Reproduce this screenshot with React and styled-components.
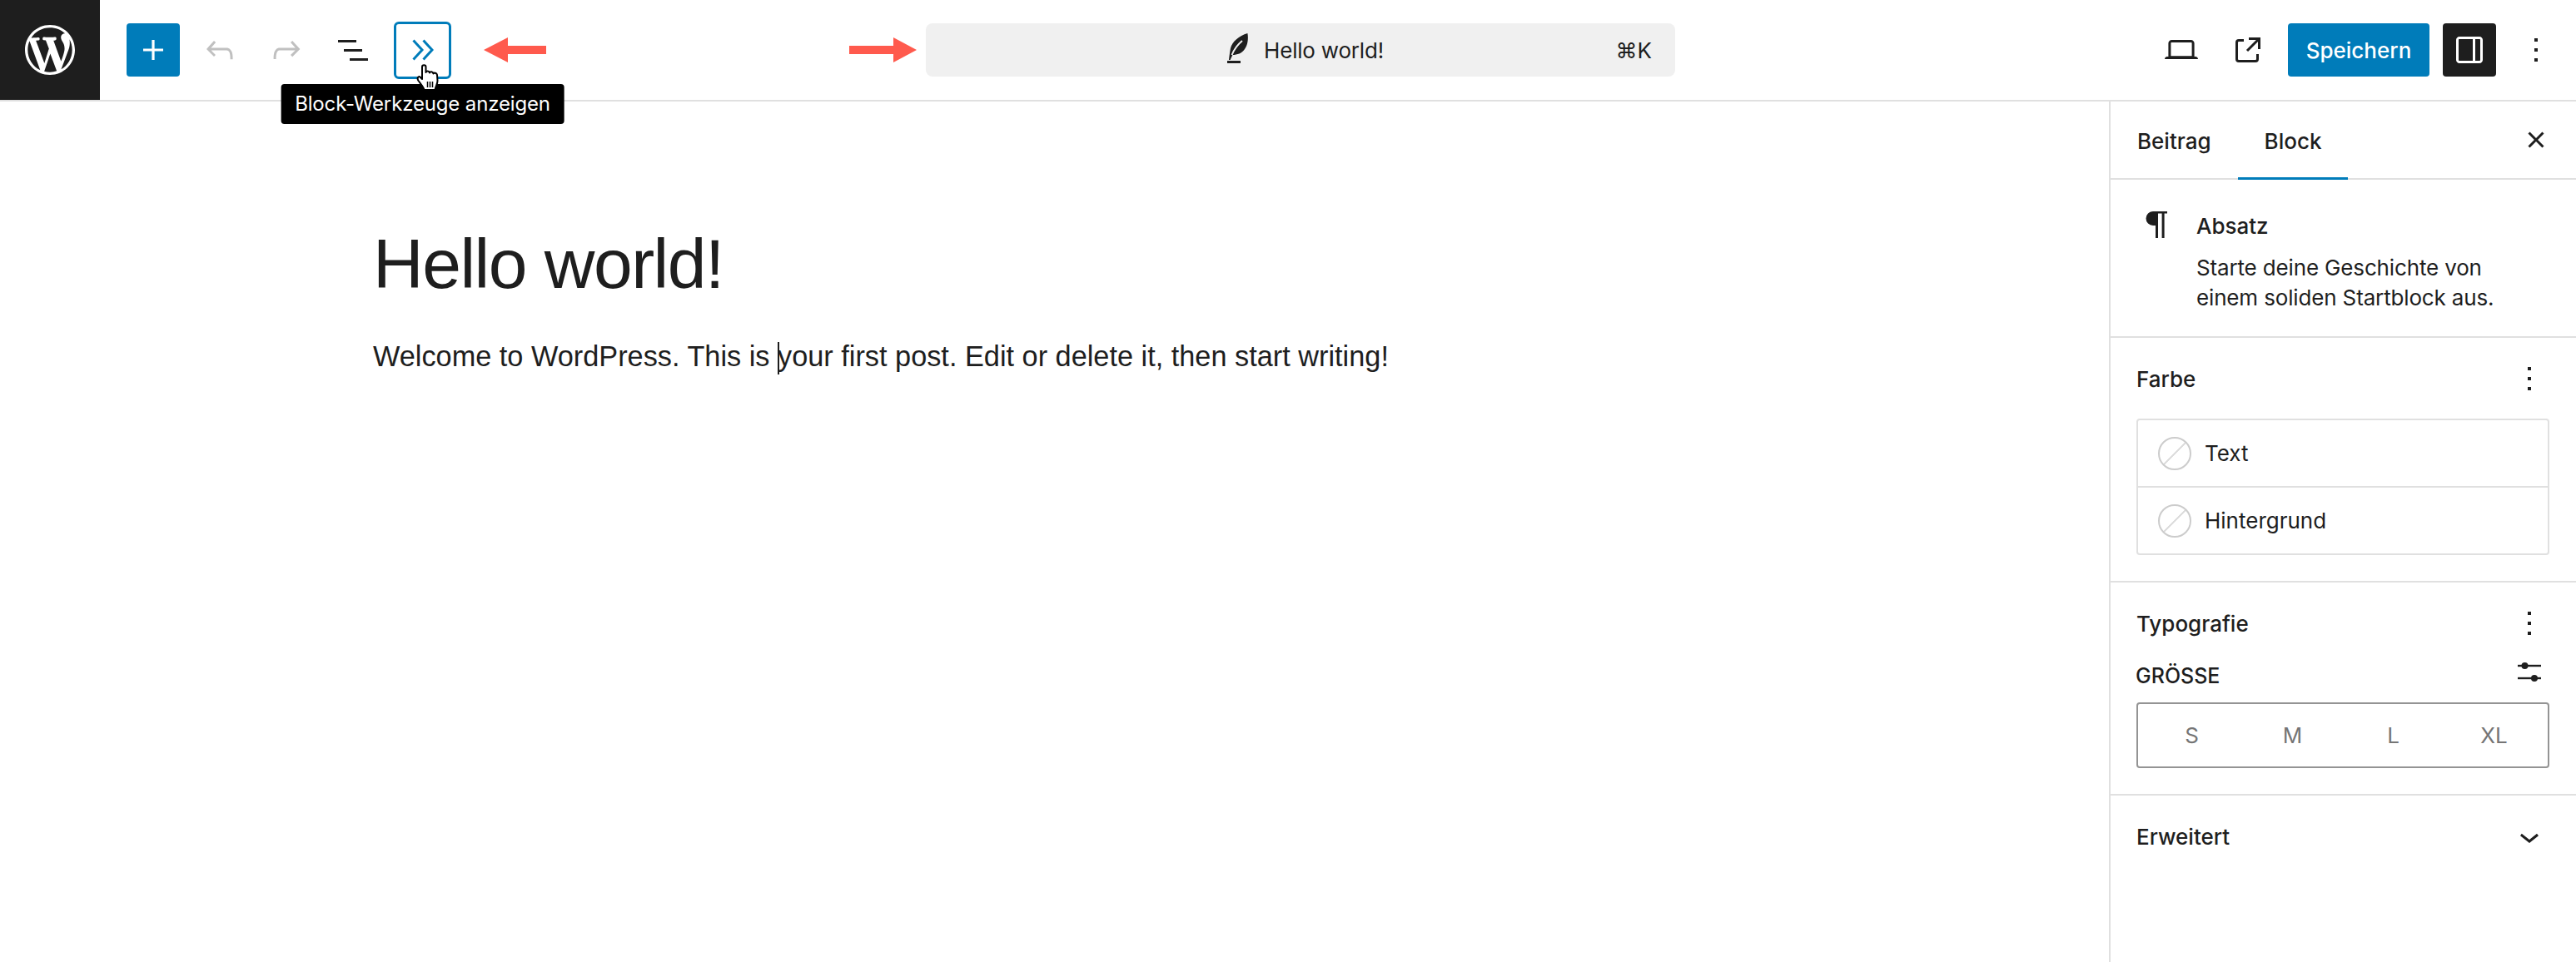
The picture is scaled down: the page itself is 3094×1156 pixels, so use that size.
import React from 'react';
import styled, { createGlobalStyle } from 'styled-components';

const GlobalStyle = createGlobalStyle`
  * { box-sizing: border-box; }
  html, body { margin: 0; padding: 0; background: #fff; }
  body {
    font-family: Inter, "Liberation Sans", sans-serif;
    font-size: 26px;
    color: #1e1e1e;
  }
`;

const Icon = ({ d, size = 48, fill = 'currentColor' }) => (
  <svg width={size} height={size} viewBox="0 0 24 24" fill={fill}>
    <path d={d} />
  </svg>
);

const paths = {
  plus: 'M18 11.2h-5.2V6h-1.6v5.2H6v1.6h5.2V18h1.6v-5.2H18z',
  undo: 'M18.3 11.7c-.6-.6-1.4-.9-2.3-.9H6.7l2.9-3.3-1.1-1-4.5 5L8.5 16l1-1-2.7-2.7H16c.5 0 .9.2 1.3.5 1 1 1 3.4 1 4.5v.3h1.5v-.2c0-1.5 0-4.3-1.5-5.7z',
  redo: 'M15.6 6.5l-1.1 1 2.9 3.3H8c-.9 0-1.7.3-2.3.9-1.4 1.5-1.4 4.2-1.4 5.6v.2h1.5v-.3c0-1.1 0-3.5 1-4.5.3-.3.7-.5 1.3-.5h9.2L14.5 15l1.1 1.1 4.6-4.6-4.6-5z',
  list: 'M3 6h11v1.5H3V6zm3.5 5.5h11V13h-11v-1.5zM21 17H10v1.5h11V17z',
  desktop: 'M20.5 16h-.7V8c0-1.1-.9-2-2-2H6.2c-1.1 0-2 .9-2 2v8h-.7c-.8 0-1.5.7-1.5 1.5h20c0-.8-.7-1.5-1.5-1.5zM5.7 8c0-.3.2-.5.5-.5h11.6c.3 0 .5.2.5.5v7.6H5.7V8z',
  external: 'M19.5 4.5h-7V6h4.44l-5.97 5.97 1.06 1.06L18 7.06v4.44h1.5v-7Zm-13 1a2 2 0 0 0-2 2v10a2 2 0 0 0 2 2h10a2 2 0 0 0 2-2v-3H17v3a.5.5 0 0 1-.5.5h-10a.5.5 0 0 1-.5-.5v-10a.5.5 0 0 1 .5-.5h3V5.5h-3Z',
  sidebar: 'M18 4H6c-1.1 0-2 .9-2 2v12c0 1.1.9 2 2 2h12c1.1 0 2-.9 2-2V6c0-1.1-.9-2-2-2zm-4 14.5H6c-.3 0-.5-.2-.5-.5V6c0-.3.2-.5.5-.5h8v13zm4.5-.5c0 .3-.2.5-.5.5h-2.5v-13H18c.3 0 .5.2.5.5v12z',
  more: 'M13 19h-2v-2h2v2zm0-6h-2v-2h2v2zm0-6h-2V5h2v2z',
  close: 'M12 13.06l3.712 3.713 1.061-1.06L13.061 12l3.712-3.712-1.06-1.06L12 10.938 8.288 7.227l-1.061 1.06L10.939 12l-3.712 3.712 1.06 1.061L12 13.061z',
  paragraph: 'M10 4h8.5v1.2h-1.7V20h-1.5V5.2H13V20h-1.5v-7.5H10A4.25 4.25 0 0 1 10 4z',
  chevronDown: 'M17.5 11.6L12 16l-5.5-4.4.9-1.2L12 14l4.5-3.6 1 1.2z',
  wordpress: 'M20 10c0-5.51-4.49-10-10-10C4.48 0 0 4.49 0 10c0 5.52 4.48 10 10 10 5.51 0 10-4.48 10-10zM7.78 15.37L4.37 6.22c.55-.02 1.17-.08 1.17-.08.5-.06.44-1.13-.06-1.11 0 0-1.45.11-2.37.11-.18 0-.37 0-.58-.01C4.12 2.69 6.87 1.11 10 1.11c2.33 0 4.45.87 6.05 2.34-.68-.11-1.65.39-1.65 1.58 0 .74.45 1.36.9 2.1.35.61.55 1.36.55 2.46 0 1.49-1.4 5-1.4 5l-3.03-8.37c.54-.02.82-.17.82-.17.5-.05.44-1.25-.06-1.22 0 0-1.44.12-2.38.12-.87 0-2.33-.12-2.33-.12-.5-.03-.56 1.2-.06 1.22l.92.08 1.26 3.41zM17.41 10c.24-.64.74-1.87.43-4.25.7 1.29 1.05 2.71 1.05 4.25 0 3.29-1.73 6.24-4.4 7.78.97-2.59 1.94-5.2 2.92-7.78zM6.1 18.09C3.12 16.65 1.11 13.53 1.11 10c0-1.3.23-2.48.72-3.59C3.25 10.3 4.67 14.2 6.1 18.09zm4.03-6.63l2.58 6.98c-.86.29-1.76.45-2.71.45-.79 0-1.57-.11-2.29-.33.81-2.38 1.62-4.74 2.42-7.1z',
};

const WpLogo = () => (
  <svg width="60" height="60" viewBox="0 0 20 20" fill="#fff">
    <path d={paths.wordpress} />
  </svg>
);

const ChevronsRight = () => (
  <svg width="26" height="26" viewBox="0 0 26 26" fill="none" stroke="#007cba" strokeWidth="3">
    <path d="M1.5 1.5 12 13 1.5 24.5" />
    <path d="M13.5 1.5 24 13 13.5 24.5" />
  </svg>
);

const FeatherIcon = () => (
  <svg width="48" height="48" viewBox="0 0 24 24">
    <path fill="#1e1e1e" d="M5 20h8v-1.500H5V20zM6 18c.3-2.500.6-5 1-7C8 7 12 3.500 17.200 2c.6 3.500.1 7-1.700 9.500C13.800 14 11 15 8.200 15L6.800 18z" />
    <path fill="none" stroke="#f0f0f0" strokeWidth="1" d="M7.800 15C9 12 11 9 14 6.500" />
  </svg>
);

const SlidersIcon = () => (
  <svg width="48" height="48" viewBox="0 0 24 24" fill="#1e1e1e">
    <rect x="5" y="7.400" width="14" height="1.200" />
    <rect x="5" y="14.900" width="14" height="1.200" />
    <circle cx="9.250" cy="8" r="2" />
    <circle cx="15" cy="15.500" r="2" />
  </svg>
);

const PointerHand = () => (
  <svg width="30" height="33" viewBox="0 0 27 33" fill="#fff" stroke="#000" strokeWidth="2" strokeLinejoin="round">
    <path d="M6.500 3.500C6.500.5 11 .5 11 3.500V10c.5-2 4-2 4.500.5.5-2 4-1.700 4.500 1 1-1.500 4-1 4.500 1.500l.5 7c0 4-2 6-3 11H9c-1-4-4-7-7-11-2-3 0-6 2-4.500L6.500 18z" />
    <path fill="none" strokeWidth="1.500" d="M13 21v7M16 21v7M19 21v7" />
  </svg>
);

const RedArrow = ({ left }) => (
  <svg width={left ? 75 : 81} height="30" viewBox={left ? '0 0 75 30' : '0 0 81 30'} fill="#ff5a4d">
    {left
      ? <path d="M0 15 29 0v10h46v10H29v10z" />
      : <path d="M81 15 53 0v10H0v10h53v10z" />}
  </svg>
);

export default function App() {
  return (
    <Page>
      <GlobalStyle />
      <Header>
        <HeaderLeft>
          <LogoBlock><WpLogo /></LogoBlock>
          <HeaderTools>
            <PrimaryButton><Icon d={paths.plus} /></PrimaryButton>
            <ToolButton $muted><Icon d={paths.undo} /></ToolButton>
            <ToolButton $muted><Icon d={paths.redo} /></ToolButton>
            <ToolButton><Icon d={paths.list} /></ToolButton>
            <BlockToolsButton>
              <ChevronsRight />
              <CursorWrap><PointerHand /></CursorWrap>
              <Tooltip>Block-Werkzeuge anzeigen</Tooltip>
            </BlockToolsButton>
            <LeftArrow><RedArrow left /></LeftArrow>
          </HeaderTools>
        </HeaderLeft>
        <HeaderCenter>
          <RedArrow />
          <CommandBar>
            <CommandTitle>
              <FeatherIcon />
              <span>Hello world!</span>
            </CommandTitle>
            <Shortcut>⌘K</Shortcut>
          </CommandBar>
        </HeaderCenter>
        <HeaderRight>
          <ToolButton><Icon d={paths.desktop} /></ToolButton>
          <ToolButton><Icon d={paths.external} /></ToolButton>
          <SaveButton>Speichern</SaveButton>
          <ToggleButton><Icon d={paths.sidebar} /></ToggleButton>
          <ToolButton><Icon d={paths.more} /></ToolButton>
        </HeaderRight>
      </Header>

      <Body>
        <Canvas>
          <PostTitle>Hello world!</PostTitle>
          <PostText>Welcome to WordPress. This is <Caret />your first post. Edit or delete it, then start writing!</PostText>
        </Canvas>

        <Sidebar>
          <Tabs>
            <TabList>
              <Tab>Beitrag</Tab>
              <Tab $active>Block</Tab>
            </TabList>
            <CloseWrap><Icon d={paths.close} /></CloseWrap>
          </Tabs>

          <BlockCard>
            <IconSlot><Icon d={paths.paragraph} /></IconSlot>
            <div>
              <BlockName>Absatz</BlockName>
              <BlockDescription>Starte deine Geschichte von<br />einem soliden Startblock aus.</BlockDescription>
            </div>
          </BlockCard>

          <Panel>
            <PanelHead>
              <PanelTitle>Farbe</PanelTitle>
              <IconSlot><Icon d={paths.more} /></IconSlot>
            </PanelHead>
            <ColorList>
              <ColorRow><Swatch />Text</ColorRow>
              <ColorRow><Swatch />Hintergrund</ColorRow>
            </ColorList>
          </Panel>

          <Panel>
            <PanelHead>
              <PanelTitle>Typografie</PanelTitle>
              <IconSlot><Icon d={paths.more} /></IconSlot>
            </PanelHead>
            <SizeHead>
              <SizeLabel>Größe</SizeLabel>
              <IconSlot><SlidersIcon /></IconSlot>
            </SizeHead>
            <SizePicker>
              {['S', 'M', 'L', 'XL'].map((size) => (
                <SizeOption key={size}>{size}</SizeOption>
              ))}
            </SizePicker>
          </Panel>

          <Panel $last>
            <PanelHead>
              <PanelTitle>Erweitert</PanelTitle>
              <IconSlot><Icon d={paths.chevronDown} /></IconSlot>
            </PanelHead>
          </Panel>
        </Sidebar>
      </Body>
    </Page>
  );
}

const Page = styled.div`
  display: flex;
  flex-direction: column;
  height: 100vh;
  overflow: hidden;
`;

const Header = styled.header`
  display: grid;
  grid-template-columns: 1020px 992px 1fr;
  height: 122px;
  border-bottom: 2px solid #e0e0e0;
  flex-shrink: 0;
`;

const HeaderLeft = styled.div`
  display: flex;
  align-items: center;
`;

const LogoBlock = styled.div`
  display: flex;
  align-items: center;
  justify-content: center;
  width: 120px;
  height: 120px;
  background: #1e1e1e;
`;

const HeaderTools = styled.div`
  display: flex;
  align-items: center;
  gap: 16px;
  margin-left: 32px;
`;

const ToolButton = styled.div`
  display: flex;
  align-items: center;
  justify-content: center;
  width: 64px;
  height: 64px;
  color: ${(p) => (p.$muted ? '#c0c0c0' : '#1e1e1e')};
`;

const PrimaryButton = styled(ToolButton)`
  background: #007cba;
  color: #fff;
  border-radius: 4px;
`;

const BlockToolsButton = styled.div`
  position: relative;
  display: flex;
  align-items: center;
  justify-content: center;
  width: 69px;
  height: 69px;
  margin-left: 1px;
  border: 3px solid #007cba;
  border-radius: 6px;
`;

const CursorWrap = styled.div`
  position: absolute;
  left: 23px;
  top: 48px;
  z-index: 3;
  line-height: 0;
`;

const Tooltip = styled.div`
  position: absolute;
  left: 50%;
  top: 72px;
  transform: translateX(-50%);
  z-index: 2;
  display: flex;
  align-items: center;
  height: 48px;
  padding: 0 17px;
  border-radius: 4px;
  background: #000;
  color: #fff;
  font-size: 24px;
  letter-spacing: -0.15px;
  white-space: nowrap;
`;

const LeftArrow = styled.div`
  display: flex;
  margin-left: 23px;
`;

const HeaderCenter = styled.div`
  display: flex;
  align-items: center;
  gap: 11px;
`;

const CommandBar = styled.div`
  position: relative;
  display: flex;
  align-items: center;
  justify-content: center;
  flex: 1;
  height: 64px;
  border-radius: 8px;
  background: #f0f0f0;
`;

const CommandTitle = styled.div`
  display: flex;
  align-items: center;
  gap: 6px;
  margin-left: 2px;
  letter-spacing: -0.2px;
`;

const Shortcut = styled.span`
  position: absolute;
  right: 28px;
  color: #1e1e1e;
`;

const HeaderRight = styled.div`
  display: flex;
  align-items: center;
  justify-content: flex-end;
  gap: 16px;
  padding-right: 16px;
`;

const SaveButton = styled.div`
  display: flex;
  align-items: center;
  justify-content: center;
  width: 170px;
  height: 64px;
  border-radius: 4px;
  background: #007cba;
  color: #fff;
  font-weight: 500;
`;

const ToggleButton = styled(ToolButton)`
  background: #1e1e1e;
  color: #fff;
  border-radius: 4px;
`;

const Body = styled.div`
  display: flex;
  flex: 1;
  min-height: 0;
`;

const Canvas = styled.main`
  flex: 1;
  padding: 136px 0 0 448px;
  font-family: "Liberation Sans", Arial, sans-serif;
`;

const PostTitle = styled.h1`
  margin: 0 0 25px;
  font-size: 84px;
  font-weight: 400;
  line-height: 118px;
  letter-spacing: -1.5px;
`;

const PostText = styled.p`
  margin: 0;
  font-size: 34.3px;
  line-height: 54px;
`;

const Caret = styled.span`
  display: inline-block;
  width: 2px;
  height: 39px;
  margin-right: -2px;
  vertical-align: -10px;
  background: #1e1e1e;
`;

const Sidebar = styled.aside`
  display: flex;
  flex-direction: column;
  width: 561px;
  border-left: 2px solid #e0e0e0;
  flex-shrink: 0;
`;

const Tabs = styled.div`
  display: flex;
  align-items: center;
  justify-content: space-between;
  height: 94px;
  padding-right: 24px;
  border-bottom: 2px solid #e0e0e0;
`;

const TabList = styled.div`
  display: flex;
  align-self: stretch;
`;

const Tab = styled.div`
  display: flex;
  align-items: center;
  padding: 0 32px;
  margin-bottom: -2px;
  font-weight: 500;
  box-shadow: ${(p) => (p.$active ? 'inset 0 -3px 0 #007cba' : 'none')};
`;

const CloseWrap = styled.div`
  display: flex;
`;

const IconSlot = styled.div`
  display: flex;
  flex-shrink: 0;
`;

const BlockCard = styled.section`
  display: flex;
  gap: 24px;
  padding: 30px 32px 28px 31px;
  height: 190px;
  border-bottom: 2px solid #e0e0e0;
`;

const BlockName = styled.div`
  margin: 8px 0 14px;
  line-height: 36px;
  font-weight: 500;
`;

const BlockDescription = styled.div`
  line-height: 36px;
  letter-spacing: -0.15px;
`;

const Panel = styled.section`
  padding: 25px 32px 31px 31px;
  border-bottom: ${(p) => (p.$last ? 'none' : '2px solid #e0e0e0')};
`;

const PanelHead = styled.div`
  display: flex;
  align-items: center;
  justify-content: space-between;
  height: 48px;
`;

const PanelTitle = styled.h2`
  margin: 0;
  font-size: 26px;
  font-weight: 500;
`;

const ColorList = styled.div`
  margin-top: 24px;
  border: 2px solid #e0e0e0;
  border-radius: 4px;
`;

const ColorRow = styled.div`
  display: flex;
  align-items: center;
  gap: 16px;
  height: 79px;
  padding-left: 24px;

  & + & {
    border-top: 2px solid #e0e0e0;
    height: 81px;
  }
`;

const Swatch = styled.span`
  width: 40px;
  height: 40px;
  border: 2px solid #ccc;
  border-radius: 50%;
  background: linear-gradient(-45deg, transparent 48%, #ddd 48%, #ddd 52%, transparent 52%);
`;

const SizeHead = styled.div`
  display: flex;
  justify-content: space-between;
  height: 48px;
  margin-top: 11px;
`;

const SizeLabel = styled.div`
  margin: 14px 0 0 -1px;
  font-size: 25px;
  font-weight: 500;
  line-height: 28px;
  text-transform: uppercase;
`;

const SizePicker = styled.div`
  display: grid;
  grid-template-columns: repeat(4, 1fr);
  height: 79px;
  margin-top: 12px;
  padding: 0 4px;
  border: 2px solid #949494;
  border-radius: 4px;
`;

const SizeOption = styled.div`
  display: flex;
  align-items: center;
  justify-content: center;
  color: #757575;
`;
